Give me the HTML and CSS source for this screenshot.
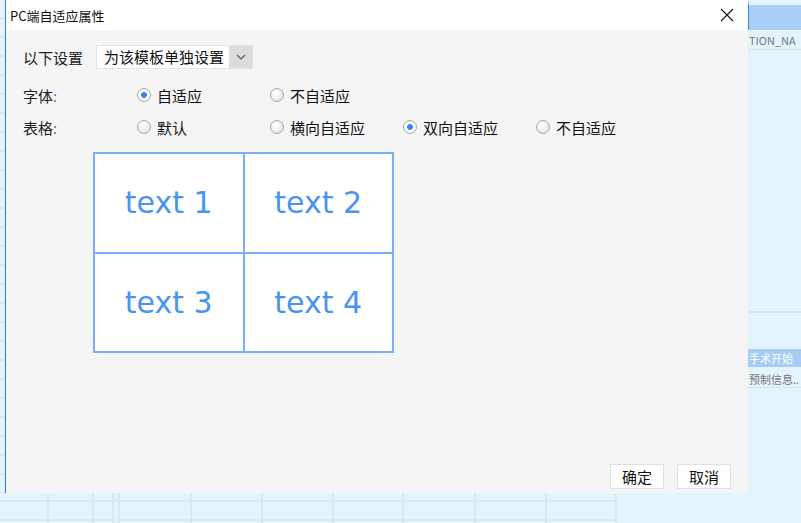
FILE: index.html
```html
<!DOCTYPE html>
<html lang="zh-CN">
<head>
    <meta charset="UTF-8">
    <title>PC端自适应属性</title>
    <link rel="stylesheet" href="styles.css">
</head>
<body>
    <div class="screen">
        <div class="side-left"></div>

        <div class="dialog">
            <div class="title-bar">
                <span class="title">PC端自适应属性</span>
                <span class="close">
                    <svg width="14" height="14" viewBox="0 0 14 14"><path d="M1 1 L13 13 M13 1 L1 13" stroke="#111" stroke-width="1.1" fill="none"/></svg>
                </span>
            </div>

            <div class="dialog-body">
                <div class="setting-row">
                    <span class="setting-label">以下设置</span>
                    <div class="select">
                        <span class="select-value">为该模板单独设置</span>
                        <span class="select-arrow">
                            <svg width="10" height="6" viewBox="0 0 10 6"><path d="M1 1 L5 5 L9 1" stroke="#555" stroke-width="1.1" fill="none"/></svg>
                        </span>
                    </div>
                </div>

                <div class="option-row first">
                    <span class="option-label">字体<i>:</i></span>
                    <label class="radio"><span class="dot checked"></span>自适应</label>
                    <label class="radio"><span class="dot"></span>不自适应</label>
                </div>

                <div class="option-row">
                    <span class="option-label">表格<i>:</i></span>
                    <label class="radio"><span class="dot"></span>默认</label>
                    <label class="radio"><span class="dot"></span>横向自适应</label>
                    <label class="radio"><span class="dot checked"></span>双向自适应</label>
                    <label class="radio"><span class="dot"></span>不自适应</label>
                </div>

                <div class="preview">
                    <div class="cell">text 1</div>
                    <div class="cell">text 2</div>
                    <div class="cell">text 3</div>
                    <div class="cell">text 4</div>
                </div>

                <div class="footer">
                    <button class="btn">确定</button>
                    <button class="btn">取消</button>
                </div>
            </div>
        </div>

        <div class="side-right">
            <div class="head"></div>
            <div class="col-name">TION_NA</div>
            <div class="gap-area"></div>
            <div class="band">手术开始</div>
            <div class="row-text">预制信息..</div>
        </div>

        <div class="bottom-grid">
            <div class="g" style="width:49px"></div>
            <div class="g" style="width:45px"></div>
            <div class="g" style="width:20px"></div>
            <div class="g" style="width:6px"></div>
            <div class="g" style="width:72px"></div>
            <div class="g" style="width:71px"></div>
            <div class="g" style="width:71px"></div>
            <div class="g" style="width:70px"></div>
            <div class="g" style="width:72px"></div>
            <div class="g" style="width:71px"></div>
            <div class="g" style="width:70px"></div>
        </div>
    </div>
</body>
</html>
```

FILE: styles.css
```css
html, body {
    margin: 0;
    padding: 0;
}
body {
    width: 801px;
    height: 523px;
    overflow: hidden;
    background: #e4f4fd;
    font-family: "Noto Sans CJK SC", "Noto Sans", sans-serif;
    color: #222;
}
.screen {
    display: grid;
    grid-template-columns: 5px 743px 53px;
    grid-template-rows: 493px 30px;
    width: 801px;
    height: 523px;
}

/* background app pieces */
.side-left {
    background: repeating-linear-gradient(180deg, #e4f4fd 0, #e4f4fd 17px, #d8e6ee 17px, #d8e6ee 19px);
}
.side-right {
    display: flex;
    flex-direction: column;
    overflow: hidden;
    background: #e4f4fd;
    font-size: 11px;
    white-space: nowrap;
}
.side-right .head {
    height: 25px;
    background: #a7cff7;
    border-left: 1px solid #3d8ae0;
    border-top: 5px solid #e4f4fd;
}
.side-right .col-name {
    height: 19px;
    line-height: 21px;
    color: #777;
    border-bottom: 1px solid #d6e2ea;
    padding-left: 1px;
}
.side-right .gap-area {
    height: 261px;
    border-bottom: 2px solid #d8e2ea;
}
.side-right .band {
    margin-top: 36px;
    height: 18px;
    line-height: 18px;
    background: #a5cdf6;
    color: #fff;
    padding-left: 1px;
}
.side-right .row-text {
    height: 20px;
    line-height: 24px;
    color: #777;
    border-bottom: 1px solid #d6e2ea;
    padding-left: 1px;
}
.bottom-grid {
    grid-column: 1 / 4;
    display: flex;
}
.bottom-grid .g {
    height: 30px;
    box-sizing: border-box;
    border-right: 2px solid #dbe8f0;
    background: linear-gradient(180deg, transparent 7px, #dbe8f0 7px, #dbe8f0 9px, transparent 9px, transparent 26px, #dbe8f0 26px, #dbe8f0 28px, transparent 28px);
}

/* dialog */
.dialog {
    display: flex;
    flex-direction: column;
    background: #f5f5f5;
    border-left: 1px solid #2e7ed6;
}
.title-bar {
    height: 30px;
    background: #fff;
    display: flex;
    align-items: center;
    justify-content: space-between;
    padding: 0 14px 0 4px;
}
.title {
    font-size: 13px;
    color: #111;
}
.close {
    display: flex;
}
.dialog-body {
    flex: 1;
    display: flex;
    flex-direction: column;
    padding: 15px 17px 4px 17px;
    font-size: 15px;
}
.setting-row {
    display: flex;
    align-items: center;
    height: 24px;
}
.setting-label {
    width: 73px;
}
.select {
    display: flex;
    width: 157px;
    height: 24px;
    box-sizing: border-box;
    border: 1px solid #e4e4e4;
    background: #fff;
}
.select-value {
    flex: 1;
    padding-left: 7px;
    line-height: 22px;
    color: #111;
}
.select-arrow {
    width: 23px;
    display: flex;
    align-items: center;
    justify-content: center;
    background: #dcdcdc;
}
.option-row {
    display: flex;
    align-items: center;
    height: 20px;
    margin-top: 12px;
}
.option-row.first {
    margin-top: 16px;
}
.option-label {
    width: 114px;
}
.option-label i {
    font-style: normal;
    color: #9a5aa8;
}
.radio {
    display: flex;
    align-items: center;
    width: 133px;
    color: #111;
}
.dot {
    width: 12px;
    height: 12px;
    border-radius: 50%;
    border: 1px solid #a8a8a8;
    background: radial-gradient(circle at 40% 35%, #ffffff 0, #f4f4f4 40%, #d8d8d8 100%);
    margin-right: 6px;
}
.dot.checked {
    background: radial-gradient(circle, #2e83f0 0, #2e83f0 2.5px, #ffffff 3.3px, #f2f2f2 100%);
}
.preview {
    display: grid;
    grid-template-columns: 1fr 1fr;
    grid-template-rows: 1fr 1fr;
    gap: 2px;
    width: 301px;
    height: 201px;
    box-sizing: border-box;
    margin: 15px 0 0 70px;
    border: 2px solid #7aaef5;
    background: #7aaef5;
}
.cell {
    background: #fff;
    display: flex;
    align-items: center;
    justify-content: center;
    font-family: "DejaVu Sans", Verdana, sans-serif;
    font-size: 30px;
    color: #4a94f0;
}
.footer {
    margin-top: auto;
    display: flex;
    justify-content: flex-end;
    gap: 13px;
}
.btn {
    width: 54px;
    height: 25px;
    padding: 0;
    background: #fff;
    border: 1px solid #e0e0e0;
    font-family: "Noto Sans CJK SC", sans-serif;
    font-size: 15px;
    color: #111;
}
```
